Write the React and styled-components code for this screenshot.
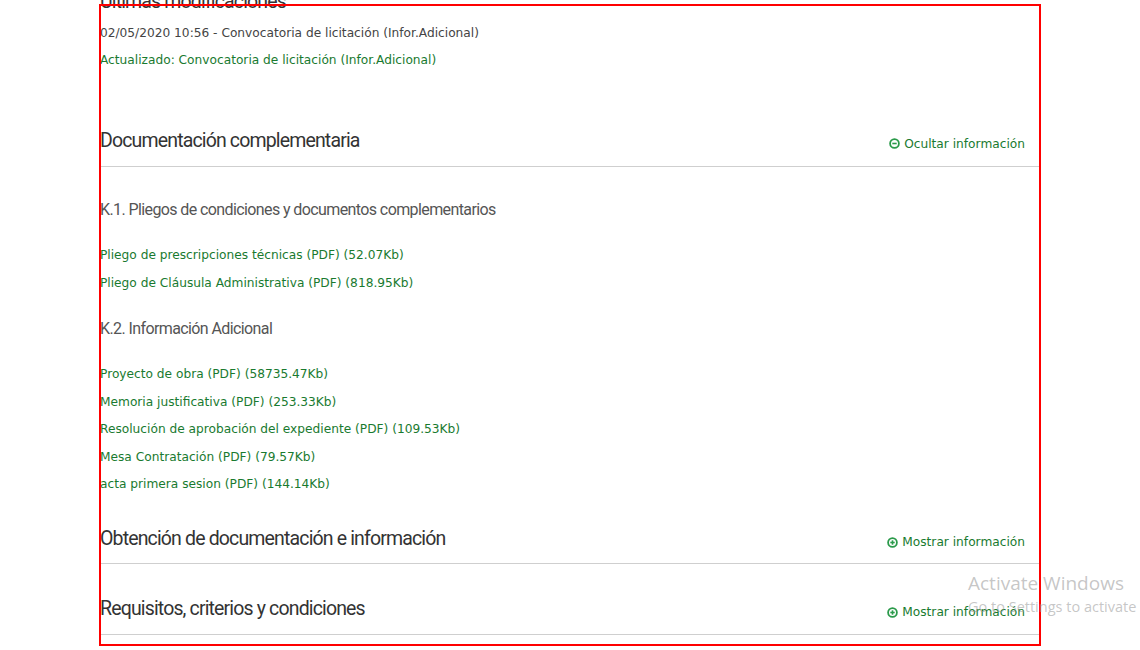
import React from "react";
import styled, { createGlobalStyle } from "styled-components";

const Global = createGlobalStyle`
  html, body { margin: 0; padding: 0; background: #fff; }
  body { overflow: hidden; }
`;

const Page = styled.div`
  width: 1140px;
  height: 650px;
  overflow: hidden;
  position: relative;
`;

const Content = styled.div`
  margin-left: 100px;
  width: 940px;
  margin-top: -10px;
  display: flex;
  flex-direction: column;
`;

const BigHeading = styled.h2`
  margin: 0;
  font-family: Roboto, "Liberation Sans", sans-serif;
  font-weight: 400;
  font-size: 19.5px;
  letter-spacing: -0.85px;
  line-height: 24px;
  color: #333;
`;

const MetaBlock = styled.div`
  margin-top: 6px;
  display: flex;
  flex-direction: column;
`;

const SmallText = styled.div`
  font-family: "DejaVu Sans", Verdana, sans-serif;
  font-size: 12.2px;
  line-height: 27px;
  color: ${(p) => (p.$green ? "#197a2f" : "#444")};
`;

const Link = styled.a`
  display: block;
  font-family: "DejaVu Sans", Verdana, sans-serif;
  font-size: 12.2px;
  line-height: 27.5px;
  color: #197a2f;
  text-decoration: none;
`;

const Section = styled.section`
  margin-top: ${(p) => p.$top}px;
  display: flex;
  flex-direction: column;
`;

const SectionHeader = styled.div`
  display: flex;
  align-items: baseline;
  justify-content: space-between;
  padding-bottom: ${(p) => p.$pad}px;
  padding-right: 15px;
  border-bottom: 1px solid #cfcfcf;
`;

const Toggle = styled.a`
  display: inline-flex;
  align-items: center;
  gap: 4px;
  font-family: "DejaVu Sans", Verdana, sans-serif;
  font-size: 12.2px;
  color: #197a2f;
  text-decoration: none;
  position: relative;
  top: ${(p) => p.$shift}px;
  svg { flex: none; }
`;

const SubHeading = styled.h3`
  margin: ${(p) => p.$top}px 0 0 0;
  font-family: Roboto, "Liberation Sans", sans-serif;
  font-weight: 400;
  font-size: 16px;
  letter-spacing: -0.6px;
  line-height: 20px;
  color: #555;
`;

const LinkList = styled.div`
  margin-top: ${(p) => p.$top}px;
  display: flex;
  flex-direction: column;
`;

const Frame = styled.div`
  position: absolute;
  left: 99px;
  top: 4px;
  width: 938px;
  height: 638px;
  border: 2px solid #ff0000;
  pointer-events: none;
`;

const Watermark = styled.div`
  position: absolute;
  left: 968px;
  top: 571px;
  font-family: "Open Sans", "DejaVu Sans", sans-serif;
  color: rgba(150, 150, 150, 0.55);
  pointer-events: none;
  white-space: nowrap;
`;

const WmTitle = styled.div`
  font-size: 19px;
  line-height: 25px;
`;

const WmSub = styled.div`
  font-size: 14.5px;
  line-height: 22px;
`;

const Icon = ({ plus }) => (
  <svg width="11" height="11" viewBox="0 0 11 11">
    <circle cx="5.5" cy="5.5" r="4.4" fill="none" stroke="#2a9a4a" strokeWidth="1.8" />
    <line x1="3.3" y1="5.5" x2="7.7" y2="5.5" stroke="#2a9a4a" strokeWidth="1.6" />
    {plus && <line x1="5.5" y1="3.3" x2="5.5" y2="7.7" stroke="#2a9a4a" strokeWidth="1.6" />}
  </svg>
);

const Header = ({ title, open, pad = 13, shift = 2 }) => (
  <SectionHeader $pad={pad}>
    <BigHeading>{title}</BigHeading>
    <Toggle href="#" $shift={shift}>
      <Icon plus={!open} />
      {open ? "Ocultar información" : "Mostrar información"}
    </Toggle>
  </SectionHeader>
);

const k1 = [
  "Pliego de prescripciones técnicas (PDF) (52.07Kb)",
  "Pliego de Cláusula Administrativa (PDF) (818.95Kb)",
];
const k2 = [
  "Proyecto de obra (PDF) (58735.47Kb)",
  "Memoria justificativa (PDF) (253.33Kb)",
  "Resolución de aprobación del expediente (PDF) (109.53Kb)",
  "Mesa Contratación (PDF) (79.57Kb)",
  "acta primera sesion (PDF) (144.14Kb)",
];

export default function App() {
  return (
    <Page>
      <Global />
      <Content>
        <BigHeading>Últimas modificaciones</BigHeading>
        <MetaBlock>
          <SmallText>02/05/2020 10:56 - Convocatoria de licitación (Infor.Adicional)</SmallText>
          <SmallText $green>Actualizado: Convocatoria de licitación (Infor.Adicional)</SmallText>
        </MetaBlock>

        <Section $top={55}>
          <Header title="Documentación complementaria" open />
          <SubHeading $top={33}>K.1. Pliegos de condiciones y documentos complementarios</SubHeading>
          <LinkList $top={22}>
            {k1.map((t) => (
              <Link href="#" key={t}>{t}</Link>
            ))}
          </LinkList>
          <SubHeading $top={22}>K.2. Información Adicional</SubHeading>
          <LinkList $top={22}>
            {k2.map((t) => (
              <Link href="#" key={t}>{t}</Link>
            ))}
          </LinkList>
        </Section>

        <Section $top={28}>
          <Header title="Obtención de documentación e información" pad={12} shift={3} />
        </Section>

        <Section $top={33}>
          <Header title="Requisitos, criterios y condiciones" shift={3} />
        </Section>
      </Content>
      <Frame />
      <Watermark>
        <WmTitle>Activate Windows</WmTitle>
        <WmSub>Go to Settings to activate</WmSub>
      </Watermark>
    </Page>
  );
}
